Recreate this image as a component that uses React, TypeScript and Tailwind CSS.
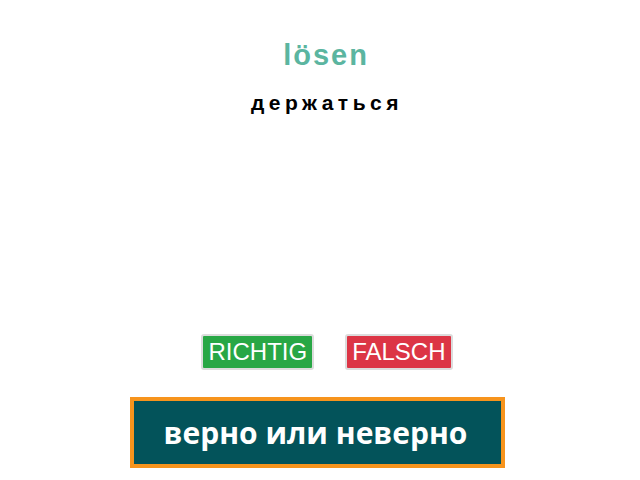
import React from "react";

export default function App() {
  return (
    <div className="w-[640px] h-[480px] bg-white flex flex-col items-center">
      <div className="ml-[12px] pt-[38px] text-[29px] leading-[35px] font-bold tracking-[2px] text-[#5bb5a0] font-['Liberation_Sans',Arial,sans-serif]">
        lösen
      </div>
      <div className="ml-[14px] mt-[17px] text-[21px] leading-[25px] font-bold tracking-[4.5px] text-black font-['Liberation_Sans',Arial,sans-serif]">
        держаться
      </div>
      <div className="ml-[14px] mt-[219px] flex gap-[31px] font-['Liberation_Sans',Arial,sans-serif]">
        <button className="h-[36px] px-[5px] bg-[#28a745] text-white text-[24px] leading-[32px] border-2 border-[#dcdcdc] rounded-[3px]">
          RICHTIG
        </button>
        <button className="h-[36px] px-[5px] bg-[#dc3545] text-white text-[24px] leading-[32px] border-2 border-[#dcdcdc] rounded-[3px]">
          FALSCH
        </button>
      </div>
      <div className="mr-[5px] mt-[27px] w-[375px] h-[71px] border-4 border-[#f7941d] bg-[#03535a] flex items-center justify-center text-white text-[30px] font-bold font-['Open_Sans',sans-serif]">
        <span className="mr-[4px]">верно или неверно</span>
      </div>
    </div>
  );
}
